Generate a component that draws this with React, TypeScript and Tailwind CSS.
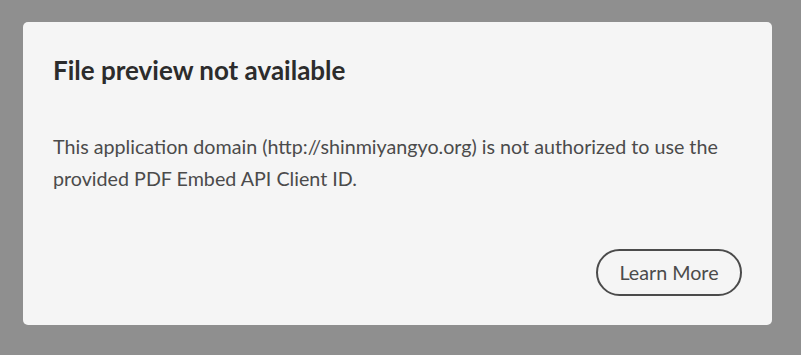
export default function App() {
  return (
    <div className="w-[801px] h-[355px] bg-[#8f8f8f] pt-[22px] pl-[23px] pr-[29px]">
      <div className="w-[749px] h-[303px] bg-[#f5f5f5] rounded-[5px] pl-[30px] pr-[30px] flex flex-col" style={{ fontFamily: 'Lato, "Open Sans", sans-serif' }}>
        <h1 className="mt-[33px] text-[26px] leading-[30px] font-bold text-[#2c2c2c]">File preview not available</h1>
        <p className="mt-[46px] text-[19.7px] leading-[32px] text-[#4b4b4b]">
          This application domain (http://shinmiyangyo.org) is not authorized to use the provided PDF Embed API Client ID.
        </p>
        <div className="mt-auto mb-[29px] flex justify-end">
          <button className="h-[47px] w-[146px] rounded-full border-2 border-[#4b4b4b] text-[19.7px] text-[#4b4b4b]">Learn More</button>
        </div>
      </div>
    </div>
  );
}
